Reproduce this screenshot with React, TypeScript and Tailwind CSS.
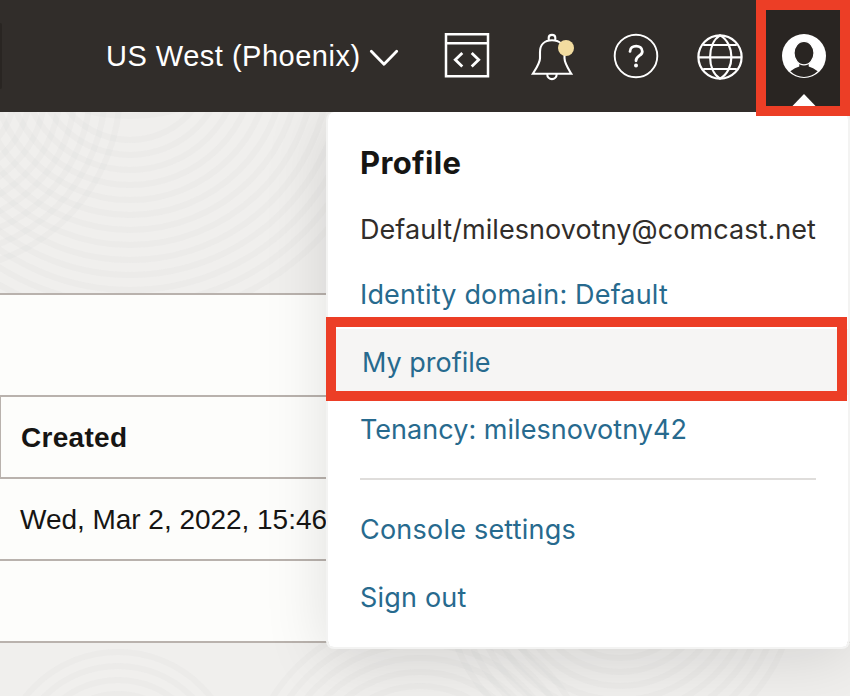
const swirls = [
  { x: 130, y: -60, min: 50, max: 200, step: 14 },
  { x: 130, y: 60, min: 80, max: 280, step: 15 },
  { x: -60, y: 90, min: 60, max: 200, step: 15 },
  { x: 118, y: 770, min: 20, max: 140, step: 14 },
  { x: 420, y: 790, min: 20, max: 200, step: 14 },
  { x: 620, y: 580, min: 50, max: 200, step: 14 },
];

function Texture() {
  return (
    <svg className="absolute inset-0 h-full w-full" viewBox="0 0 850 696" fill="none">
      {swirls.map((s, i) =>
        Array.from({ length: Math.floor((s.max - s.min) / s.step) }, (_, k) => (
          <circle key={`${i}-${k}`} cx={s.x} cy={s.y} r={s.min + k * s.step} stroke="#dddcda" strokeOpacity="0.2" strokeWidth="6" />
        )),
      )}
    </svg>
  );
}

function Header() {
  return (
    <header className="relative z-20 flex h-28 items-center bg-[#312d2a] text-white">
      <div className="h-[66px] w-0.5 rounded-r bg-[#292522]" />
      <div className="ml-[104px] mt-0.5 w-[253px] whitespace-nowrap font-['Liberation_Sans',Arial,sans-serif] text-[29px] tracking-[0.5px]">
        US West (Phoenix)
      </div>
      <svg className="ml-[9px] mt-1 h-[24px] w-[32px]" viewBox="368 46 32 24" fill="none" stroke="white" strokeWidth="2.8" strokeLinecap="round" strokeLinejoin="round">
        <path d="M371.3 51.3 384 64.2 396.7 51.3" />
      </svg>
      <svg className="ml-11 h-[46px] w-[46px] shrink-0" viewBox="444 33 46 46" fill="none" stroke="white" strokeWidth="2.5">
        <path d="M446 34.2H488V76.2H446ZM446 43.3H488" />
        <path d="M462.3 53 455.3 59.7 462.3 66.4M471.7 53 478.7 59.7 471.7 66.4" strokeWidth="2.8" />
      </svg>
      <svg className="ml-[40px] h-[50px] w-[46px] shrink-0" viewBox="530 31 46 50" fill="none" stroke="white" strokeWidth="2.1">
        <path d="M548.7 40.8V37.8C548.7 33.9 555.3 33.9 555.3 37.8V40.8M532.8 73.8H571.3C568.3 68.8 564.5 63 564.5 58.2V52C564.5 44.8 559.5 40.3 552 40.3S540 44.8 540 52V58.2C540 63 535.8 68.8 532.8 73.8ZM547.2 74C547.2 80.8 556.7 80.8 556.7 74" />
        <circle cx="566" cy="48" r="8" fill="#f2dca0" stroke="none" />
      </svg>
      <svg className="ml-9 h-[48px] w-[48px] shrink-0" viewBox="612 32 48 48" fill="none" stroke="white">
        <circle cx="636" cy="56" r="21.3" strokeWidth="1.9" />
        <path d="M630 51.4C630 44.4 642.3 44.4 642.3 51.4C642.3 56.2 636 55.2 636 60.8" strokeWidth="2.8" strokeLinecap="round" />
        <circle cx="636" cy="65.6" r="2" fill="white" stroke="none" />
      </svg>
      <svg className="ml-9 h-[48px] w-[48px] shrink-0" viewBox="696 32 48 48" fill="none" stroke="white" strokeWidth="2.2">
        <circle cx="720" cy="57" r="21.6" />
        <path d="M720 35.4C706.8 43.5 706.8 70.5 720 78.6C735.2 70.5 735.2 43.5 720 35.4ZM703.2 45H736.8M698.2 57.3H741.8M703.2 69H736.8" />
      </svg>
      <div className="ml-3 h-full w-[94px] shrink-0 bg-[#292522]">
        <svg className="h-28 w-[94px]" viewBox="756 0 94 112">
          <circle cx="804" cy="56" r="22" fill="white" />
          <path d="M790.3 71.2Q795 67.8 799.3 66.5V62H808.7V66.5Q813 67.8 817.7 71.2Q811.5 76.9 804 76.9T790.3 71.2Z" fill="#292522" />
          <ellipse cx="804" cy="53.1" rx="10" ry="11.8" fill="#292522" stroke="white" strokeWidth="1.2" />
          <path d="M792 106.5 804 94 816 106.5Z" fill="white" />
        </svg>
      </div>
    </header>
  );
}

function ProfileMenu() {
  const row = "flex items-center whitespace-nowrap pl-8";
  return (
    <nav className="absolute left-[326px] top-28 z-10 flex h-[537px] w-[524px] flex-col rounded-lg border-2 border-t-0 border-[#f3f3f2] bg-white bg-clip-padding pt-[18px] font-[Inter,sans-serif] text-[27px] text-[#276a8e] shadow-[0_8px_64px_rgba(0,0,0,0.12)]">
      <h2 className={`${row} h-[66px] text-[31px] font-bold tracking-[0.35px] text-[#161513]`}>Profile</h2>
      <div className={`${row} mt-px h-[66px] tracking-[0.07px] text-[#312d2a]`}>Default/milesnovotny@comcast.net</div>
      <a className={`${row} h-16 tracking-[0.16px]`}>Identity domain: Default</a>
      <a className={`${row} mt-0.5 h-[66px] bg-[#f6f5f4] pl-[34px] pt-0.5 tracking-[0px]`}>My profile</a>
      <a className={`${row} h-[68px] pt-0.5 tracking-[0.03px]`}>Tenancy: milesnovotny42</a>
      <div className="mb-4 ml-8 mr-8 mt-[15px] h-0.5 shrink-0 bg-[#dfdddb]" />
      <a className={`${row} h-[68px] tracking-[0.22px]`}>Console settings</a>
      <a className={`${row} h-[68px] tracking-[0.2px]`}>Sign out</a>
    </nav>
  );
}

export default function App() {
  return (
    <div className="relative h-[696px] w-[850px] overflow-hidden bg-[#f0efed]">
      <Texture />
      <Header />
      <main className="relative mt-[181px] h-[350px] border-y-2 border-[#b9b2ad] bg-[#fdfdfb] font-['Liberation_Sans',Arial,sans-serif] text-[28px] text-[#161513]">
        <div className="h-[100px]" />
        <div className="flex h-[84px] items-center border-y-2 border-l border-[#b9b2ad] pl-5 pt-0.5 font-bold tracking-[0.3px]">Created</div>
        <div className="flex h-[82px] items-center whitespace-nowrap border-b-2 border-[#b9b2ad] pl-5 pt-0.5 tracking-[-0.03px]">Wed, Mar 2, 2022, 15:46</div>
      </main>
      <ProfileMenu />
      <div className="absolute left-[326px] top-[317px] z-30 h-[84px] w-[521px] border-10 border-[#ec3e26]" />
      <div className="absolute left-[756px] top-0 z-30 h-[116px] w-[94px] border-10 border-[#ec3e26]" />
    </div>
  );
}
